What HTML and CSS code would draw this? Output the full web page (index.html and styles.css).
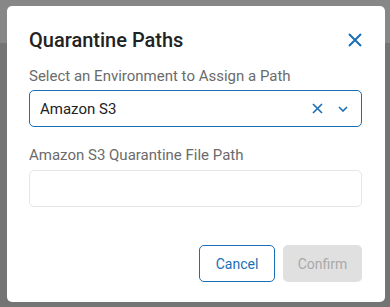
FILE: index.html
```html
<!DOCTYPE html>
<html>
<head>
<meta charset="utf-8">
<link rel="stylesheet" href="styles.css">
</head>
<body>
<div class="backdrop">
  <div class="modal">
    <div class="header">
      <h2 class="title">Quarantine Paths</h2>
      <button class="close" aria-label="Close">
        <svg width="14" height="14" viewBox="0 0 14 14"><path d="M1 1L13 13M13 1L1 13" stroke="#1a6eb5" stroke-width="2" fill="none"/></svg>
      </button>
    </div>
    <label class="label">Select an Environment to Assign a Path</label>
    <div class="select">
      <span class="value">Amazon S3</span>
      <span class="icons">
        <svg class="clear" width="11" height="11" viewBox="0 0 11 11"><path d="M1 1L10 10M10 1L1 10" stroke="#1a6eb5" stroke-width="1.6" fill="none"/></svg>
        <svg class="chev" width="10" height="6" viewBox="0 0 10 6"><path d="M1 1L5 5L9 1" stroke="#1a6eb5" stroke-width="1.6" fill="none"/></svg>
      </span>
    </div>
    <label class="label second">Amazon S3 Quarantine File Path</label>
    <div class="input"></div>
    <div class="footer">
      <button class="btn cancel">Cancel</button>
      <button class="btn confirm">Confirm</button>
    </div>
  </div>
</div>
</body>
</html>
```
FILE: styles.css
```css
html, body {
  margin: 0;
  padding: 0;
}
body {
  width: 390px;
  height: 307px;
  background: #7a7a7a;
  font-family: Roboto, "Liberation Sans", sans-serif;
  overflow: hidden;
}
.backdrop {
  padding: 6px 5px 5px 7px;
  background: linear-gradient(#878787 0 43px, #747474 43px);
}
.modal {
  box-sizing: border-box;
  width: 378px;
  height: 296px;
  background: #fff;
  border-radius: 5px;
  padding: 22px 23px 20px 22px;
  display: flex;
  flex-direction: column;
}
.header {
  display: flex;
  justify-content: space-between;
  align-items: center;
  height: 24px;
}
.title {
  margin: 0;
  font-size: 20px;
  line-height: 24px;
  font-weight: 500;
  color: #222;
}
.close {
  border: 0;
  background: none;
  padding: 0;
  width: 14px;
  height: 14px;
  display: flex;
  margin-top: -1px;
}
.label {
  display: block;
  margin-top: 16px;
  font-size: 15px;
  line-height: 16px;
  color: #6b6b6b;
}
.label.second {
  margin-top: 20px;
}
.select {
  box-sizing: border-box;
  margin-top: 6px;
  height: 37px;
  border: 1px solid #1a6eb5;
  border-radius: 5px;
  display: flex;
  align-items: center;
  justify-content: space-between;
  padding: 0 13px 0 10px;
}
.value {
  font-size: 15px;
  color: #222;
}
.icons {
  display: flex;
  align-items: center;
  gap: 15px;
}
.input {
  box-sizing: border-box;
  margin-top: 7px;
  height: 37px;
  border: 1px solid #e6e6e6;
  border-radius: 5px;
}
.footer {
  margin-top: auto;
  display: flex;
  justify-content: flex-end;
  gap: 8px;
}
.btn {
  box-sizing: border-box;
  height: 37px;
  border-radius: 5px;
  font-family: Roboto, "Liberation Sans", sans-serif;
  font-size: 14px;
  padding: 0;
}
.cancel {
  width: 76px;
  background: #fff;
  border: 1px solid #1a6eb5;
  color: #1a6eb5;
}
.confirm {
  width: 79px;
  background: #e0e0e0;
  border: 0;
  color: #a9a9a9;
}
```
